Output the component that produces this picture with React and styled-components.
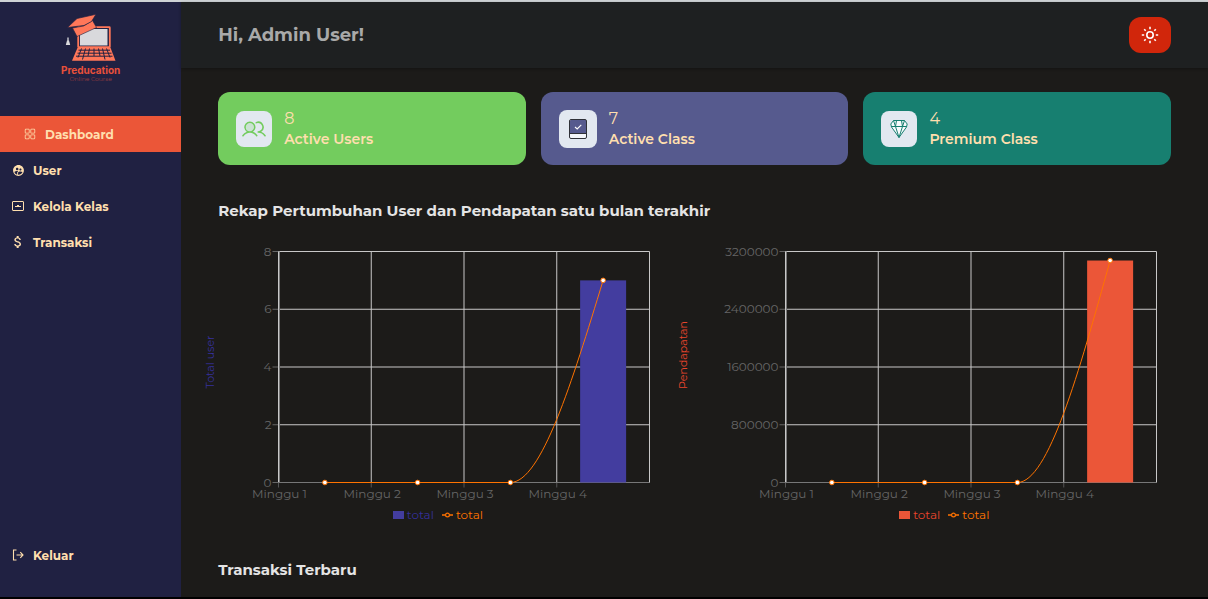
import React, { useLayoutEffect, useRef, useState } from "react";
import styled, { createGlobalStyle } from "styled-components";
import { RxDashboard } from "react-icons/rx";
import { MdAttachMoney, MdSupervisedUserCircle } from "react-icons/md";
import { PiUsersDuotone } from "react-icons/pi";

const GlobalStyle = createGlobalStyle`
  *, *::before, *::after { box-sizing: border-box; }
  body {
    margin: 0;
    background: #1c1b19;
    font-family: Montserrat, Inter, "Liberation Sans", sans-serif;
  }
`;

const Shell = styled.div`
  display: grid;
  grid-template-columns: 15% minmax(0, 1fr);
  min-height: 100vh;
  border-top: 2px solid #cfd3d6;
  border-bottom: 2px solid #000;
`;

const Sidebar = styled.aside`
  display: flex;
  flex-direction: column;
  background: #202142;
  padding-bottom: 24px;
`;

const Brand = styled.a`
  display: flex;
  flex-direction: column;
  align-items: center;
  height: 114px;
  padding-top: 12px;
  color: #e8503a;
  text-decoration: none;
`;

const BrandName = styled.span`
  font-family: Inter, sans-serif;
  font-size: 10px;
  line-height: 12px;
  font-weight: 700;
`;

const BrandTag = styled.span`
  font-size: 6px;
  line-height: 6px;
  color: #9a3d40;
`;

const Nav = styled.nav`
  display: flex;
  flex-direction: column;
  flex: 1;
`;

const NavLink = styled.a`
  display: flex;
  align-items: center;
  gap: 9px;
  height: 36px;
  padding-left: ${(p) => (p.$active ? 24 : 12)}px;
  margin-top: ${(p) => (p.$last ? "auto" : 0)};
  background: ${(p) => (p.$active ? "#eb5638" : "transparent")};
  color: #ffdfae;
  font-size: 12px;
  font-weight: 700;
  text-decoration: none;
`;

const NavIcon = styled.span`
  display: flex;
  align-items: center;
  justify-content: center;
  width: 12px;

  svg {
    flex: none;
  }
`;

const Main = styled.main`
  min-width: 0;
  background: #1c1b19;
`;

const Header = styled.header`
  display: flex;
  align-items: center;
  justify-content: space-between;
  height: 66px;
  padding: 0 37px;
  background: #1e2021;
  box-shadow: 0 1px 3px rgba(0, 0, 0, 0.3);
`;

const Greeting = styled.h1`
  margin: 0;
  font-size: 18px;
  line-height: 24px;
  font-weight: 700;
  color: #a9a9a9;
`;

const ThemeButton = styled.button`
  display: grid;
  place-items: center;
  width: 42px;
  height: 36px;
  padding: 0;
  border: 0;
  border-radius: 12px;
  background: #d1260b;
  color: #fff;
`;

const Cards = styled.section`
  display: grid;
  grid-template-columns: repeat(3, minmax(0, 1fr));
  gap: 15px;
  padding: 24px 37px 0;
`;

const Card = styled.article`
  display: flex;
  align-items: center;
  gap: 12px;
  height: 73px;
  padding: 0 18px;
  border-radius: 12px;
  background: ${(p) => p.$color};
  color: #ffdfae;
`;

const IconTile = styled.div`
  display: grid;
  place-items: center;
  width: ${(p) => p.$size || 36}px;
  height: ${(p) => p.$size || 36}px;
  border-radius: 8px;
  background: #e2e8f0;
  color: ${(p) => p.$color};
`;

const CardValue = styled.div`
  font-size: 16px;
  line-height: 21px;
`;

const CardLabel = styled.div`
  font-size: 14px;
  line-height: 21px;
  font-weight: 600;
`;

const SectionTitle = styled.h2`
  margin: 0;
  padding: 36px 37px 0;
  font-size: 15px;
  line-height: 20px;
  font-weight: 700;
  color: #e4e4e4;
`;

const Charts = styled.section`
  display: grid;
  grid-template-columns: calc(50% - 14px) calc(50% + 14px);
  padding: 20px 37px 0 19px;
`;

const Figure = styled.figure`
  margin: 0;
  min-width: 0;

  svg {
    display: block;
  }
`;

const Tick = styled.text`
  font-size: 12px;
  fill: #666;
`;

const AxisTitle = styled.text`
  font-size: 11px;
  fill: ${(p) => p.$color};
`;

const Legend = styled.figcaption`
  display: flex;
  justify-content: center;
  gap: 8px;
  padding-left: ${(p) => p.$left}px;
  padding-right: ${(p) => p.$right}px;
`;

const LegendItem = styled.span`
  display: flex;
  align-items: center;
  gap: 3px;
  font-size: 12px;
  line-height: 19px;
  color: ${(p) => p.$color};
`;

const Swatch = styled.span`
  width: 11px;
  height: 8px;
  background: ${(p) => p.$color};
`;

const LINE = "#ff7300";

function Chart({ title, color, titleColor, ticks, max, data, left, right, titleX, titleY }) {
  const ref = useRef(null);
  const [width, setWidth] = useState(480);

  useLayoutEffect(() => {
    const update = () => setWidth(Math.round(ref.current.clientWidth));
    update();
    const observer = new ResizeObserver(update);
    observer.observe(ref.current);
    return () => observer.disconnect();
  }, []);

  const top = 10.5;
  const bottom = 241.5;
  const x0 = left + 0.5;
  const x1 = width - right - 0.5;
  const band = (x1 - x0) / data.length;
  const y = (v) => bottom - (v / max) * (bottom - top);
  const points = data.map((v, i) => [x0 + band * (i + 0.5), y(v)]);
  const [, , p2, p3] = points;
  const third = (p3[0] - p2[0]) / 3;
  const path =
    `M${points[0][0]},${bottom}H${p2[0]}` +
    `C${p2[0] + third},${p2[1]} ${p2[0] + 2 * third},${p2[1] + (p3[1] - p2[1]) / 2} ${p3[0]},${p3[1]}`;

  return (
    <Figure ref={ref}>
      <svg width={width} height={264} role="img" aria-label={title}>
        {ticks.map((t) => (
          <g key={t}>
            <path d={`M${x0 - 6},${y(t)}H${x0}`} stroke="#666" />
            <path d={`M${x0},${y(t)}H${x1}`} stroke={t === 0 ? "#777" : "#c8c8c8"} />
            <Tick x={x0 - 7} y={y(t) + 4} textAnchor="end">{t}</Tick>
          </g>
        ))}
        {[0, 1, 2, 3, 4].map((i) => (
          <path key={i} d={`M${x0 + band * i},${top}V${bottom}`} stroke="#c8c8c8" />
        ))}
        <path d={`M${x0 + 1},${top}V${bottom}`} stroke="#777" />
        {data.map((v, i) => (
          <g key={i}>
            <path d={`M${x0 + band * i},${bottom}v5`} stroke="#555" />
            <Tick x={x0 + band * i + 1} y={bottom + 15} textAnchor="middle">
              {`Minggu ${i + 1}`}
            </Tick>
            {v > 0 && (
              <rect x={points[i][0] - 23} y={y(v)} width={46} height={bottom - y(v)} fill={color} />
            )}
          </g>
        ))}
        <path d={path} fill="none" stroke={LINE} strokeWidth="1" />
        {points.map(([px, py], i) => (
          <circle key={i} cx={px} cy={py} r="2.3" fill="#fff" stroke={LINE} />
        ))}
        <AxisTitle
          $color={titleColor}
          textAnchor="middle"
          transform={`translate(${titleX} ${titleY}) rotate(-90)`}
        >
          {title}
        </AxisTitle>
      </svg>
      <Legend $left={left - 53} $right={right}>
        <LegendItem $color={titleColor}>
          <Swatch $color={color} />
          total
        </LegendItem>
        <LegendItem $color={LINE}>
          <svg width="11" height="8" aria-hidden="true">
            <path d="M0,4H3.5M7.5,4H11" stroke={LINE} strokeWidth="1.4" />
            <circle cx="5.5" cy="4" r="1.9" fill="none" stroke={LINE} strokeWidth="1.2" />
          </svg>
          total
        </LegendItem>
      </Legend>
    </Figure>
  );
}

function LogoMark() {
  return (
    <svg width="56" height="50" viewBox="0 0 56 50" aria-hidden="true">
      <rect x="15.2" y="13.2" width="31.6" height="20" rx="0.5" fill="#202142" stroke="#ff7759" strokeWidth="1.8" />
      <rect x="17" y="15" width="27.5" height="16.500" fill="#d9d9dc" />
      <path d="M14.500 33.800H47.500L52.500 46.800H9Z" fill="#ff7759" />
      <path
        d="M15.500 36.200H47M14.500 39.200H48.500M13 42.200H49.500M18.500 34.500L15 43.500M22.500 34.500L19.500 45.500M26.500 34.500L25 42M31 34.500V42M35.500 34.500L37 42M39.500 34.500L42 45.500M43.500 34.500L47 43.500"
        stroke="#202142"
        strokeWidth="1"
        fill="none"
      />
      <path d="M9.500 14L20.500 12L29.500 6.500L33.500 13.500L14 22.500Z" fill="#ff7759" stroke="#202142" strokeWidth=".6" />
      <path d="M4.500 13.500L14 4.500L33 0.300L28.500 7.500L21 11.500Z" fill="#ff7759" stroke="#202142" strokeWidth=".7" />
      <path d="M5 23.500V27" stroke="#d9d9dc" strokeWidth="1.300" />
      <path d="M4 26.500H6L7.200 31H2.800Z" fill="#d9d9dc" />
    </svg>
  );
}

function ClassroomIcon() {
  return (
    <svg width="12" height="10" viewBox="0 0 12 10" aria-hidden="true">
      <rect x="0.5" y="0.5" width="11" height="9" rx="0.5" fill="none" stroke="currentColor" />
      <path d="M3 5.500H9M5 4.500H7" stroke="currentColor" strokeWidth="1.200" />
    </svg>
  );
}

function ExitIcon() {
  return (
    <svg width="12" height="12" viewBox="0 0 12 12" aria-hidden="true" fill="none" stroke="currentColor" strokeWidth="1.100">
      <path d="M4.500 1H1.500V11H4.500M4.500 6H11M8.300 3.200L11 6L8.300 8.800" />
    </svg>
  );
}

function SunIcon() {
  return (
    <svg width="18" height="18" viewBox="0 0 18 18" aria-hidden="true" fill="none" stroke="currentColor" strokeWidth="1.600">
      <circle cx="9" cy="9" r="3.200" />
      <path d="M9 0.800V3.200M9 14.800V17.200M0.800 9H3.200M14.800 9H17.200M3.200 3.200L4.700 4.700M13.300 13.300L14.800 14.800M3.200 14.800L4.700 13.300M13.300 4.700L14.800 3.200" />
    </svg>
  );
}

function BookIcon() {
  return (
    <svg width="20" height="22" viewBox="0 0 20 22" aria-hidden="true">
      <rect x="1.500" y="1.500" width="17" height="19" rx="1.500" fill="#f4f6fa" />
      <path d="M2 3Q2 2 3 2H18V15H2Z" fill="#565a8e" />
      <rect x="1.500" y="1.500" width="17" height="19" rx="1.500" fill="none" stroke="#2f3138" />
      <path d="M2 15.500H18" stroke="#2f3138" />
      <path d="M7 9L9.200 11L13.300 6.800" fill="none" stroke="#fff" strokeWidth="1.100" />
    </svg>
  );
}

function DiamondIcon() {
  return (
    <svg width="18" height="20" viewBox="0 0 18 20" aria-hidden="true" fill="none" stroke="currentColor" strokeWidth="1" strokeLinejoin="round">
      <path d="M3.500 1.500H14.500L17.200 5L16.500 8L9 18.500L1.500 8L0.800 5Z" fill="#f8fbfd" />
      <path d="M1.200 7.500H16.800M6.500 1.500L5.500 7.500L9 18.500L12.500 7.500L11.500 1.500M3.500 1.500L5.500 7.500M14.500 1.500L12.500 7.500" />
    </svg>
  );
}

export default function App() {
  return (
    <>
      <GlobalStyle />
      <Shell>
        <Sidebar>
          <Brand href="#">
            <LogoMark />
            <BrandName>Preducation</BrandName>
            <BrandTag>Online Course</BrandTag>
          </Brand>
          <Nav>
            <NavLink href="#dashboard" $active>
              <NavIcon><RxDashboard size={12} /></NavIcon>Dashboard
            </NavLink>
            <NavLink href="#user">
              <NavIcon><MdSupervisedUserCircle size={13} /></NavIcon>User
            </NavLink>
            <NavLink href="#kelas">
              <NavIcon><ClassroomIcon /></NavIcon>Kelola Kelas
            </NavLink>
            <NavLink href="#transaksi">
              <NavIcon><MdAttachMoney size={16} /></NavIcon>Transaksi
            </NavLink>
            <NavLink href="#keluar" $last>
              <NavIcon><ExitIcon /></NavIcon>Keluar
            </NavLink>
          </Nav>
        </Sidebar>
        <Main>
          <Header>
            <Greeting>Hi, Admin User!</Greeting>
            <ThemeButton type="button" aria-label="Toggle theme"><SunIcon /></ThemeButton>
          </Header>
          <Cards>
            <Card $color="#73cc5e">
              <IconTile $color="#73cc5e"><PiUsersDuotone size={24} /></IconTile>
              <div>
                <CardValue>8</CardValue>
                <CardLabel>Active Users</CardLabel>
              </div>
            </Card>
            <Card $color="#565a8e">
              <IconTile $color="#565a8e" $size={38}><BookIcon /></IconTile>
              <div>
                <CardValue>7</CardValue>
                <CardLabel>Active Class</CardLabel>
              </div>
            </Card>
            <Card $color="#177f70">
              <IconTile $color="#177f70"><DiamondIcon /></IconTile>
              <div>
                <CardValue>4</CardValue>
                <CardLabel>Premium Class</CardLabel>
              </div>
            </Card>
          </Cards>
          <SectionTitle>Rekap Pertumbuhan User dan Pendapatan satu bulan terakhir</SectionTitle>
          <Charts>
            <Chart
              title="Total user"
              color="#433d9f"
              titleColor="#35309b"
              ticks={[0, 2, 4, 6, 8]}
              max={8}
              data={[0, 0, 0, 7]}
              left={78}
              right={21}
              titleX={14}
              titleY={121}
            />
            <Chart
              title="Pendapatan"
              color="#eb5638"
              titleColor="#e8452c"
              ticks={[0, 800000, 1600000, 2400000, 3200000]}
              max={3200000}
              data={[0, 0, 0, 3075000]}
              left={113}
              right={14}
              titleX={15}
              titleY={114}
            />
          </Charts>
          <SectionTitle>Transaksi Terbaru</SectionTitle>
        </Main>
      </Shell>
    </>
  );
}
